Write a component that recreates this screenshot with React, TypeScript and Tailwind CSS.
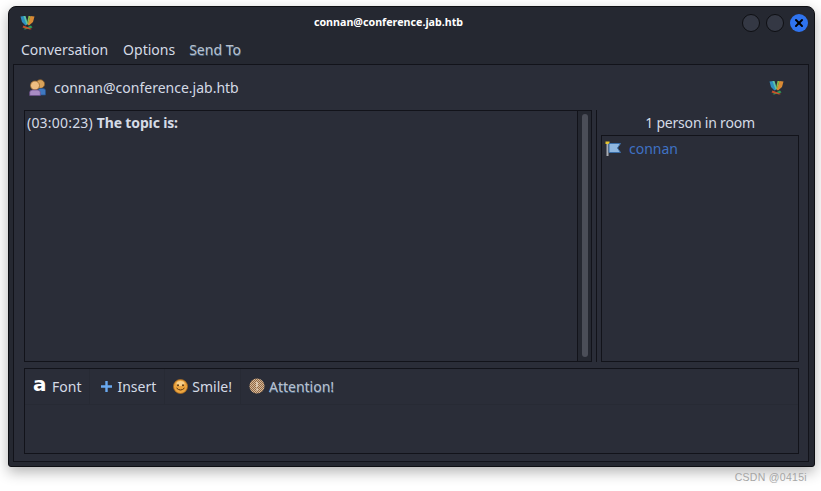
import { X } from "lucide-react";

function PidginLogo({ className }: { className?: string }) {
  return (
    <svg viewBox="0 0 15 15" className={className}>
      <path d="M0.5 1.5 L4.5 1 L7.5 9.5 L5.5 10.5 L2 7 Z" fill="#2f8fc0" />
      <path d="M3.5 1 L5.5 1 L8 9 L6.5 9.5 Z" fill="#5cc4a8" />
      <path d="M14.5 1.5 L10.5 1 L7.5 9.5 L9 10.5 L13 7 Z" fill="#d98a34" />
      <path d="M8.5 1 L10.5 1 L8 9 L7 8.5 Z" fill="#8cbf4a" />
      <path d="M3.5 14 L11 10.5 L12.5 12.5 L5 14.5 Z" fill="#2f9e58" />
      <path d="M3.5 10.5 L12 14 L10 14.5 L2.5 12.5 Z" fill="#c8502a" />
    </svg>
  );
}

function PeopleIcon() {
  return (
    <svg viewBox="0 0 17 17" className="w-[17px] h-[17px] shrink-0">
      <circle cx="11.3" cy="5" r="4.3" fill="#d8a25a" stroke="#8a5f2c" strokeWidth="0.8" />
      <path d="M9 16 V11 Q9 9.5 11 9.5 H14 Q16.5 9.5 16.5 11.5 V16 Z" fill="#3f78c0" stroke="#27528c" strokeWidth="0.7" />
      <circle cx="6" cy="6.5" r="4.5" fill="#eebd82" stroke="#96662f" strokeWidth="0.8" />
      <path d="M0.7 16.5 V13.5 Q0.7 11 3.5 11 H8.5 Q11.3 11 11.3 13.5 V16.5 Z" fill="#a98cc4" stroke="#6d4f8c" strokeWidth="0.7" />
    </svg>
  );
}

function FlagIcon() {
  return (
    <svg viewBox="0 0 17 16" className="w-[17px] h-[16px] shrink-0">
      <rect x="1.5" y="2" width="2" height="13" fill="#a9adb3" />
      <rect x="0.5" y="0.5" width="4" height="2.5" fill="#e6c52e" />
      <path d="M4 2.5 H15.5 L12.5 7 L15.5 11.5 H4 Z" fill="#8fb7e0" stroke="#3a6ea8" strokeWidth="1" />
    </svg>
  );
}

function SmileIcon() {
  return (
    <svg viewBox="0 0 15 15" className="w-[15px] h-[15px] shrink-0">
      <circle cx="7.5" cy="7.5" r="7" fill="#eda53f" stroke="#a8691f" strokeWidth="0.8" />
      <ellipse cx="7.5" cy="4.5" rx="4" ry="2.5" fill="#f8cf88" />
      <circle cx="5" cy="6.2" r="1" fill="#5a3510" />
      <circle cx="10" cy="6.2" r="1" fill="#5a3510" />
      <path d="M3.5 9 Q7.5 13 11.5 9" fill="none" stroke="#5a3510" strokeWidth="1" />
    </svg>
  );
}

function AttentionIcon() {
  return (
    <svg viewBox="0 0 16 16" className="w-[16px] h-[16px] shrink-0">
      <defs>
        <pattern id="dither" width="2" height="2" patternUnits="userSpaceOnUse">
          <rect width="2" height="2" fill="#8a6a4c" />
          <rect width="1" height="1" fill="#dcb894" />
          <rect x="1" y="1" width="1" height="1" fill="#dcb894" />
        </pattern>
      </defs>
      <circle cx="8" cy="8" r="7.6" fill="url(#dither)" />
      <rect x="7" y="4" width="2" height="5" fill="#d9c4ac" />
      <rect x="7" y="10.5" width="2" height="2" fill="#d9c4ac" />
    </svg>
  );
}

function ToolButton({ icon, label, blur }: { icon: React.ReactNode; label: string; blur?: boolean }) {
  return (
    <div className="flex items-center gap-[4px] h-[36px] px-[8px] pb-[2px] border-r border-[#272a34] last:border-r-0">
      {icon}
      <span className={blur ? "text-[14px] text-[#b9c0cd] [text-shadow:0.5px_0.5px_0_rgba(111,168,220,0.5)]" : "text-[14px] text-[#d5dbe6]"}>{label}</span>
    </div>
  );
}

export default function App() {
  return (
    <div className="w-[821px] h-[491px] overflow-hidden bg-white pl-[8px] pt-[6px] font-['Noto_Sans',sans-serif]">
      {/* Window */}
      <div className="w-[807px] h-[461px] flex flex-col bg-[#252831] border border-[#0e0f13] rounded-t-[8px] rounded-b-[3px] shadow-[0_5px_14px_rgba(0,0,0,0.3)] text-[#d5dbe6]">
        {/* Title bar */}
        <div className="relative h-[31px] flex items-center justify-between pl-[11px] pr-[6px] shrink-0">
          <PidginLogo className="w-[15px] h-[15px]" />
          <span className="absolute left-0 right-[46px] text-center text-[10.7px] font-bold text-white">connan@conference.jab.htb</span>
          <div className="relative flex items-center gap-[6px]">
            <div className="w-[18px] h-[18px] rounded-full bg-[#343844] border border-[#0e0f13]" />
            <div className="w-[18px] h-[18px] rounded-full bg-[#343844] border border-[#0e0f13]" />
            <div className="w-[18px] h-[18px] rounded-full bg-[#2f74f0] flex items-center justify-center">
              <X className="w-[12px] h-[12px] text-black" strokeWidth={4} />
            </div>
          </div>
        </div>

        {/* Menu */}
        <div className="h-[26px] flex items-center gap-[15px] pl-[12px] pb-[3px] text-[14px] shrink-0">
          <span>Conversation</span>
          <span>Options</span>
          <span className="-ml-[1px] text-[#b9c0cd] [text-shadow:0.5px_0.5px_0_rgba(111,168,220,0.5)]">Send To</span>
        </div>

        {/* Notebook */}
        <div className="w-[796px] h-[398px] ml-[4px] flex flex-col bg-[#2a2d38] border border-[#12131a] pl-[10px] pr-[9px]">
          {/* Tab header */}
          <div className="h-[45px] flex items-center justify-between pl-[5px] pr-[15px] shrink-0">
            <div className="flex items-center gap-[8px]">
              <PeopleIcon />
              <span className="text-[14px]">connan@conference.jab.htb</span>
            </div>
            <PidginLogo className="w-[15px] h-[15px]" />
          </div>

          {/* Chat and people */}
          <div className="h-[252px] flex shrink-0">
            <div className="w-[568px] flex border border-[#12131a]">
              <div className="flex-1 pl-[2px] pt-[2px] text-[14px] leading-[20px]">
                <span className="tracking-[0.2px]">(03:00:23) </span>
                <span className="font-bold tracking-[-0.15px]">The topic is:</span>
              </div>
              <div className="w-[14px] border-l border-[#12131a] bg-[#252831] flex justify-center pt-[3px] pb-[4px]">
                <div className="w-[6px] h-full rounded-full bg-[#4b4e58]" />
              </div>
            </div>
            <div className="w-[1px] ml-[4px] bg-[#12131a]" />
            <div className="w-[198px] ml-[4px] flex flex-col">
              <div className="h-[25px] flex items-center justify-center text-[14px] tracking-[-0.2px] shrink-0">1 person in room</div>
              <div className="flex-1 border border-[#12131a]">
                <div className="flex items-center gap-[7px] pl-[3px] pt-[4px]">
                  <FlagIcon />
                  <span className="text-[14px] leading-[18px] text-[#3f71c4]">connan</span>
                </div>
              </div>
            </div>
          </div>

          {/* Input */}
          <div className="w-[775px] h-[86px] mt-[6px] border border-[#12131a] shrink-0">
            <div className="flex h-[36px] border-b border-[#272a34]">
              <ToolButton
                icon={<span className="w-[15px] text-[20px] leading-none font-bold text-white font-['DejaVu_Sans',sans-serif] -mt-[4px]">a</span>}
                label="Font"
              />
              <ToolButton
                icon={
                  <span className="w-[15px] flex justify-end">
                    <svg viewBox="0 0 13 13" className="w-[13px] h-[13px]">
                      <path d="M6.5 1 V12 M1 6.5 H12" stroke="#6aa9f0" strokeWidth="2.4" />
                    </svg>
                  </span>
                }
                label="Insert"
              />
              <ToolButton icon={<SmileIcon />} label="Smile!" />
              <ToolButton icon={<AttentionIcon />} label="Attention!" blur />
            </div>
          </div>
        </div>
      </div>

      {/* Watermark */}
      <div className="w-[799px] text-right mt-[4px] text-[10.5px] leading-[12px] tracking-[0.3px] text-[#a6a6a6] font-['Liberation_Sans',sans-serif]">
        CSDN @0415i
      </div>
    </div>
  );
}
